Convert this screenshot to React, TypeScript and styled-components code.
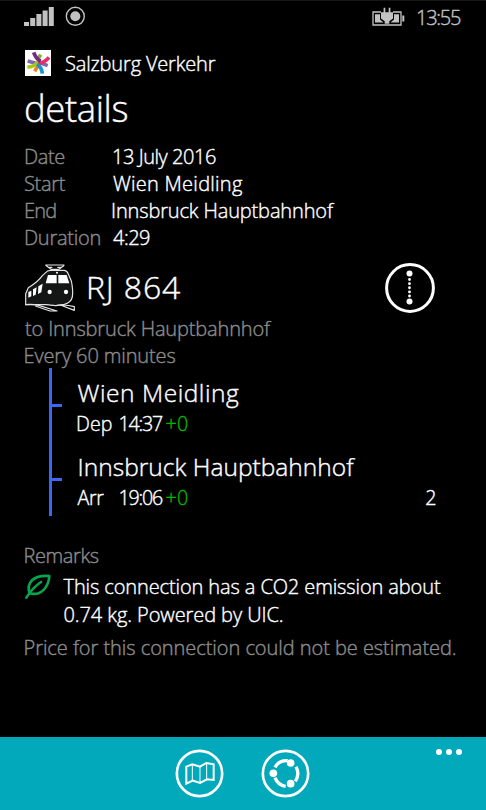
import React from 'react';
import styled, { createGlobalStyle } from 'styled-components';

const GlobalStyle = createGlobalStyle`
  *, *::before, *::after { box-sizing: border-box; }
  body { margin: 0; background: #000; }
  svg { display: block; flex: none; }
`;

type Fit = { $track?: number; $shift?: number };

const Screen = styled.div`
  width: 486px;
  height: 810px;
  display: flex;
  flex-direction: column;
  overflow: hidden;
  background: #000;
  color: #fff;
  font-family: 'Open Sans', 'Noto Sans', sans-serif;
  font-weight: 300;
  -webkit-text-stroke: 0.4px currentColor;
  font-size: 20px;
  line-height: 27px;
  white-space: nowrap;
`;

const Text = styled.span<Fit>`
  letter-spacing: ${(p) => p.$track ?? 0}px;
  margin-left: ${(p) => p.$shift ?? 0}px;
`;

const Muted = styled(Text)`
  color: #8c8c8c;
`;

const StatusBar = styled.header`
  display: flex;
  justify-content: space-between;
  height: 50px;
  padding: 3px 24px 0;
  border-top: 1px solid #171717;
  color: #c2c2c2;
`;

const StatusGroup = styled.div`
  display: flex;
  align-items: flex-start;
`;

const SignalIcon = styled.svg`
  margin: 3px 11px 0 0;
`;
const RecordIcon = styled.svg`
  margin-top: 2px;
`;
const BatteryIcon = styled.svg`
  margin: 3px 11px 0 0;
`;
const Clock = styled.time`
  width: 46px;
  letter-spacing: -1.25px;
`;

const Content = styled.main`
  flex: 1;
  display: flex;
  flex-direction: column;
  padding: 0 24px;
`;

const Brand = styled.div`
  display: flex;
  height: 34px;
  gap: 14px;
  padding-left: 1px;
`;

const Title = styled.h1`
  margin: 0 0 11px;
  font-size: 36.5px;
  line-height: 48px;
  font-weight: 300;
  letter-spacing: -0.4px;
`;

const Facts = styled.dl`
  display: grid;
  grid-template-columns: 88px 1fr;
  grid-auto-rows: 27px;
  margin: 0 0 8px;
`;
const Label = styled.dt<Fit>`
  color: #8c8c8c;
  letter-spacing: ${(p) => p.$track}px;
`;
const Value = styled.dd<Fit>`
  margin: 0 0 0 ${(p) => p.$shift}px;
  letter-spacing: ${(p) => p.$track}px;
`;

const TripHead = styled.div`
  display: flex;
  height: 56px;
  padding: 3px 27px 0 0;
`;
const TripName = styled.h2`
  flex: 1;
  margin: 3px 0 0 10px;
  font-size: 32px;
  line-height: 44px;
  font-weight: 300;
  letter-spacing: 0.85px;
`;
const RouteIcon = styled.svg`
  margin-top: 1px;
`;
const TripMeta = styled.div`
  display: flex;
  flex-direction: column;
  height: 53px;
`;

const Stops = styled.ol`
  list-style: none;
  margin: 0 0 26px 25px;
  padding: 0;
  border-left: 3px solid #3c66f5;
`;
const Stop = styled.li`
  display: flex;
  height: 74px;
`;
const Tick = styled.i`
  width: 10px;
  height: 3px;
  margin: 35.5px 15.5px 0 0;
  background: #3c66f5;
`;
const StopBody = styled.div`
  flex: 1;
  padding-top: 8px;
`;
const StopName = styled.div<Fit>`
  font-size: 24.5px;
  line-height: 34px;
  letter-spacing: ${(p) => p.$track}px;
`;
const StopTime = styled.div`
  display: flex;
  font-size: 19.6px;
`;
const Kind = styled(Text)`
  width: ${(p) => 41 - (p.$shift ?? 0)}px;
`;
const Delay = styled(Text)`
  margin-left: 3.5px;
  letter-spacing: 0.5px;
  color: #00b400;
`;
const Platform = styled(Text)`
  margin-left: auto;
  padding-right: 25.5px;
`;

const Remark = styled.div`
  display: flex;
  margin: 4px 0 5px;
  line-height: 28px;
`;
const LeafIcon = styled.svg`
  margin: 0 12.5px 0 0;
`;
const Lines = styled.div`
  display: flex;
  flex-direction: column;
`;

const AppBar = styled.footer`
  display: grid;
  grid-template-columns: 1fr auto 1fr;
  height: 73px;
  padding: 12px 25px 0 23px;
  background: #02a9bb;
`;
const Actions = styled.div`
  grid-column: 2;
  display: flex;
  gap: 37px;
`;
const MoreIcon = styled.svg`
  justify-self: end;
  margin-right: -1px;
`;

const Train = () => (
  <svg width="52" height="51" viewBox="29 21 156 153" fill="none" stroke="#e4e4e4" strokeWidth="3.5" strokeLinejoin="round">
    <path d="M93 30h57M98 37h16M129 37h16M94 31l16 12h24l16-12" />
    <path fill="#141615" d="M94 53Q98 46 108 46h42Q159 47 162 57L171 78Q177 106 174 126Q170 143 150 148L124 152L95 149L34 149V116L42 98Q70 82 84 62Z" />
    <path d="M33 149Q55 147 73 151L128 168H107L63 153M128 151Q157 148 180 155V166L138 150" />
    <path fill="#fff" stroke="none" d="M101 60h26v25H94zM132 60h25l8 25h-33zM42 111l9-4v17l-9 4zM56 103l11-6-3 22-8 4zM72 94l13-8-4 26-10 5z" />
    <circle cx="106" cy="111" r="6.5" fill="#fff" stroke="none" />
    <circle cx="155" cy="111" r="6.5" fill="#fff" stroke="none" />
    <circle cx="128" cy="53" r="3" fill="#fff" stroke="none" />
  </svg>
);

export default function App() {
  return (
    <>
      <GlobalStyle />
      <Screen>
        <StatusBar>
          <StatusGroup>
            <SignalIcon width="30" height="19" viewBox="0 0 30 19" fill="#c2c2c2">
              <path d="M0 15h5v4H0zM6.2 11h5v8h-5zM12.4 7h5v12h-5zM18.6 3.5h5V19h-5zM24.8 0h5v19h-5z" />
            </SignalIcon>
            <RecordIcon width="20" height="20" viewBox="0 0 20 20" fill="none">
              <circle cx="10.3" cy="10.3" r="9" stroke="#c2c2c2" strokeWidth="1.4" />
              <circle cx="10.3" cy="10.3" r="5" fill="#c2c2c2" />
            </RecordIcon>
          </StatusGroup>
          <StatusGroup>
            <BatteryIcon width="33" height="20" viewBox="0 0 33 20" fill="#c2c2c2">
              <path d="M9 5H1v13h28V5h-8" fill="none" stroke="#c2c2c2" strokeWidth="1.3" />
              <path d="M3 7.3h5v5.2l3.5 3H3zM22 12.5V7.3h5v8.2h-8.5zM30.3 8.5h2v6h-2z" />
              <path d="M11.6 .8h1.7v4.4h3.4V.8h1.7v4.4H21v6.3l-3.7 2.7v2.5h-4.6v-2.5L9 11.5V5.2h2.6z" />
            </BatteryIcon>
            <Clock>13:55</Clock>
          </StatusGroup>
        </StatusBar>
        <Content>
          <Brand>
            <svg width="26" height="26" viewBox="0 0 78 78" fill="none" strokeWidth="11">
              <path fill="#fff" d="M0 0h78v78H0z" />
              <path stroke="#79bd28" d="M47 14L37 31" />
              <path stroke="#ee7f22" d="M29 64L39 47" />
              <path stroke="#7d67b2" d="M8 33L32 40M48 39L68 47" />
              <path stroke="#a5c718" d="M7 51Q29 51 39 34" />
              <path stroke="#e72d62" d="M72 22Q59 38 40 41" />
              <path stroke="#1695ce" d="M36 43Q50 50 52 71" />
              <path stroke="#7b2687" d="M26 7Q32 25 47 34" />
            </svg>
            <Text $track={-0.16}>Salzburg Verkehr</Text>
          </Brand>
          <Title>details</Title>
          <Facts>
            <Label $track={-0.4}>Date</Label>
            <Value $track={-0.45} $shift={0}>13 July 2016</Value>
            <Label $track={-0.3}>Start</Label>
            <Value $track={0.25} $shift={1}>Wien Meidling</Value>
            <Label $track={-0.8}>End</Label>
            <Value $track={-0.14} $shift={-1}>Innsbruck Hauptbahnhof</Value>
            <Label $track={-0.25}>Duration</Label>
            <Value $track={-0.5} $shift={1}>4:29</Value>
          </Facts>
          <TripHead>
            <Train />
            <TripName>RJ 864</TripName>
            <RouteIcon width="50" height="50" viewBox="0 0 50 50" fill="#fff">
              <circle cx="25" cy="25" r="23.4" fill="none" stroke="#fff" strokeWidth="3" />
              <circle cx="24.5" cy="10.5" r="3" />
              <circle cx="24.5" cy="38.5" r="3" />
              <path d="M24.5 16.5v17" stroke="#fff" strokeWidth="2.8" strokeLinecap="round" strokeDasharray="0.1 4" />
            </RouteIcon>
          </TripHead>
          <TripMeta>
            <Muted $track={-0.14} $shift={1}>to Innsbruck Hauptbahnhof</Muted>
            <Muted $track={-0.13} $shift={-0.5}>Every 60 minutes</Muted>
          </TripMeta>
          <Stops>
            <Stop>
              <Tick />
              <StopBody>
                <StopName $track={0.55}>Wien Meidling</StopName>
                <StopTime>
                  <Kind $track={0.1} $shift={-1.5}>Dep</Kind>
                  <Text $track={-1.2}>14:37</Text>
                  <Delay>+0</Delay>
                </StopTime>
              </StopBody>
            </Stop>
            <Stop>
              <Tick />
              <StopBody>
                <StopName $track={0.03}>Innsbruck Hauptbahnhof</StopName>
                <StopTime>
                  <Kind $track={-0.3}>Arr</Kind>
                  <Text $track={-1.2}>19:06</Text>
                  <Delay>+0</Delay>
                  <Platform>2</Platform>
                </StopTime>
              </StopBody>
            </Stop>
          </Stops>
          <Muted $track={-0.4} $shift={-0.5}>Remarks</Muted>
          <Remark>
            <LeafIcon width="27" height="27" viewBox="0 0 81 81" fill="none" stroke="#05a550" strokeWidth="8" strokeLinecap="round" strokeLinejoin="round">
              <path d="M7 74C18 56 32 40 51 27M16 60C8 32 24 5 76 9C74 42 50 72 16 60Z" />
            </LeafIcon>
            <Lines>
              <Text $track={-0.11}>This connection has a CO2 emission about</Text>
              <Text $track={-0.08}>0.74 kg. Powered by UIC.</Text>
            </Lines>
          </Remark>
          <Muted $track={-0.05} $shift={-0.5}>Price for this connection could not be estimated.</Muted>
        </Content>
        <AppBar>
          <Actions>
            <svg width="49" height="49" viewBox="0 0 147 147" fill="none" stroke="#fff">
              <circle cx="73.5" cy="73.5" r="68" strokeWidth="8" />
              <path strokeWidth="6" d="M34 53L52 46L75 53L94 42L116 46V93L96 91L75 102L53 95L34 104Z" />
              <path strokeWidth="3" d="M52 46V95M75 53V102M95 42V91" />
            </svg>
            <svg width="49" height="49" viewBox="0 0 147 147" fill="none" stroke="#fff">
              <circle cx="73.5" cy="73.5" r="68" strokeWidth="8" />
              <path strokeWidth="10" d="M42 55Q54 33 80 35M105 53Q117 76 103 97M74 112Q50 108 42 86" />
              <g fill="#fff" stroke="none">
                <circle cx="89" cy="42" r="11.5" />
                <circle cx="89" cy="104" r="11.5" />
                <circle cx="37" cy="73" r="11.5" />
              </g>
            </svg>
          </Actions>
          <MoreIcon width="26" height="6" viewBox="0 0 26 6" fill="#fff">
            <circle cx="3" cy="3" r="3" />
            <circle cx="13" cy="3" r="3" />
            <circle cx="23" cy="3" r="3" />
          </MoreIcon>
        </AppBar>
      </Screen>
    </>
  );
}
